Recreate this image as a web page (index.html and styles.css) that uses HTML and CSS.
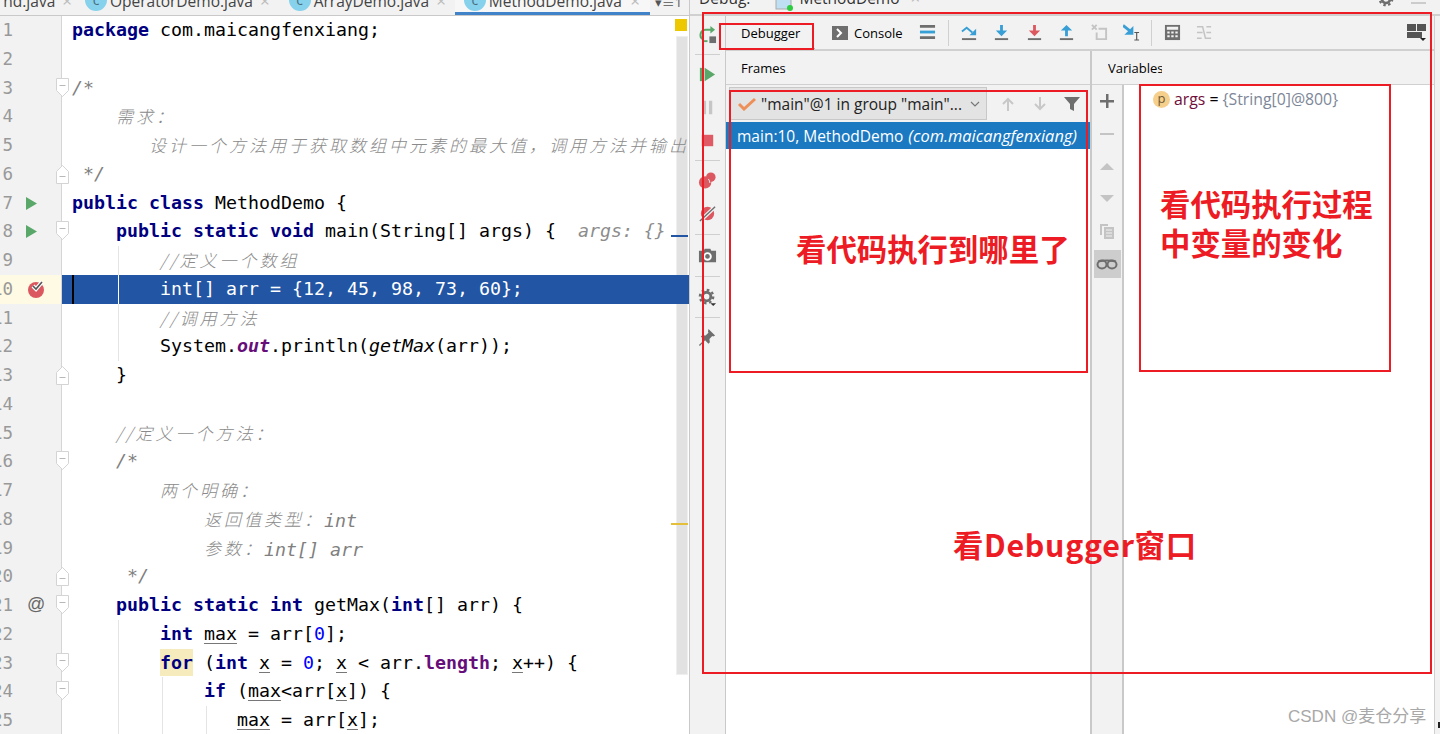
FILE: index.html
```html
<!DOCTYPE html>
<html lang="zh-CN">
<head>
<meta charset="utf-8">
<title>MethodDemo Debugger</title>
<link rel="stylesheet" href="styles.css">
</head>
<body>
<svg class="defs" width="0" height="0" aria-hidden="true">
  <symbol id="fold-open" viewBox="0 0 13 20"><path d="M.5.5h12v12l-6 6-6-6z" fill="#fff" stroke="#d4d4d4"/><path d="M3.5 7.5h6" stroke="#b8b8b8"/></symbol>
  <symbol id="fold-close" viewBox="0 0 13 20"><path d="M.5 19.5h12v-12l-6-6-6 6z" fill="#fff" stroke="#d4d4d4"/><path d="M3.5 12.5h6" stroke="#b8b8b8"/></symbol>
  <symbol id="run" viewBox="0 0 11 13"><path d="M0 0l11 6.5L0 13z" fill="#59a869"/></symbol>
</svg>
<div class="app">
  <section class="editor">
    <nav class="tabs">
      <div class="tab tab-first"><span class="tab-name">nd.java</span><span class="tab-x">×</span></div>
      <div class="tab"><span class="tab-c">c</span><span class="tab-name">OperatorDemo.java</span><span class="tab-x">×</span></div>
      <div class="tab"><span class="tab-c">c</span><span class="tab-name">ArrayDemo.java</span><span class="tab-x">×</span></div>
      <div class="tab tab-active"><span class="tab-c">c</span><span class="tab-name">MethodDemo.java</span><span class="tab-x">×</span></div>
      <div class="tab-more">▾≡1</div>
    </nav>
    <div class="code">
      <div class="scroll-track"></div>
      <div class="line"><div class="gutter"><span class="num">1</span></div><pre class="src"><b>package</b> com.maicangfenxiang;</pre></div>
      <div class="line"><div class="gutter"><span class="num">2</span></div><pre class="src"></pre></div>
      <div class="line"><div class="gutter"><span class="num">3</span><svg class="fold"><use href="#fold-open"/></svg></div><pre class="src"><i>/*</i></pre></div>
      <div class="line"><div class="gutter"><span class="num">4</span></div><pre class="src"><i>    <span class="hw">需求：</span></i></pre></div>
      <div class="line"><div class="gutter"><span class="num">5</span></div><pre class="src"><i>       <span class="hw">设计一个方法用于获取数组中元素的最大值，调用方法并输出</span></i></pre></div>
      <div class="line"><div class="gutter"><span class="num">6</span><svg class="fold"><use href="#fold-close"/></svg></div><pre class="src"><i> */</i></pre></div>
      <div class="line"><div class="gutter"><span class="num">7</span><svg class="gicon gicon-run"><use href="#run"/></svg></div><pre class="src"><b>public class</b> MethodDemo {</pre></div>
      <div class="line"><div class="gutter"><span class="num">8</span><svg class="gicon gicon-run"><use href="#run"/></svg><svg class="fold"><use href="#fold-open"/></svg></div><pre class="src">    <b>public static void</b> main(String[] args) {  <i class="hint">args: {}</i></pre></div>
      <div class="line guide1"><div class="gutter"><span class="num">9</span></div><pre class="src"><i>        <span class="hw">//定义一个数组</span></i></pre></div>
      <div class="line exec"><div class="gutter"><span class="num">10</span><svg class="gicon gicon-bp" viewBox="0 0 18 18"><circle cx="9" cy="10" r="8" fill="#db5860"/><path d="M6 6l3 3 6-7" fill="none" stroke="#fff" stroke-width="4"/><path d="M6 6l3 3 6-7" fill="none" stroke="#555" stroke-width="1.6"/></svg></div><pre class="src"><span class="caret"></span>        int[] arr = {12, 45, 98, 73, 60};</pre></div>
      <div class="line guide1"><div class="gutter"><span class="num">11</span></div><pre class="src"><i>        <span class="hw">//调用方法</span></i></pre></div>
      <div class="line guide1"><div class="gutter"><span class="num">12</span></div><pre class="src">        System.<em class="field">out</em>.println(<em>getMax</em>(arr));</pre></div>
      <div class="line"><div class="gutter"><span class="num">13</span><svg class="fold"><use href="#fold-close"/></svg></div><pre class="src">    }</pre></div>
      <div class="line"><div class="gutter"><span class="num">14</span></div><pre class="src"></pre></div>
      <div class="line"><div class="gutter"><span class="num">15</span></div><pre class="src"><i>    <span class="hw">//定义一个方法：</span></i></pre></div>
      <div class="line"><div class="gutter"><span class="num">16</span><svg class="fold"><use href="#fold-open"/></svg></div><pre class="src"><i>    /*</i></pre></div>
      <div class="line"><div class="gutter"><span class="num">17</span></div><pre class="src"><i>        <span class="hw">两个明确：</span></i></pre></div>
      <div class="line"><div class="gutter"><span class="num">18</span></div><pre class="src"><i>            <span class="hw">返回值类型：</span>int</i></pre></div>
      <div class="line"><div class="gutter"><span class="num">19</span></div><pre class="src"><i>            <span class="hw">参数：</span>int[] arr</i></pre></div>
      <div class="line"><div class="gutter"><span class="num">20</span><svg class="fold"><use href="#fold-close"/></svg></div><pre class="src"><i>     */</i></pre></div>
      <div class="line"><div class="gutter"><span class="num">21</span><span class="gicon gicon-at">@</span><svg class="fold"><use href="#fold-open"/></svg></div><pre class="src">    <b>public static int</b> getMax(<b>int</b>[] arr) {</pre></div>
      <div class="line guide1"><div class="gutter"><span class="num">22</span></div><pre class="src">        <b>int</b> <u>max</u> = arr[<span class="n">0</span>];</pre></div>
      <div class="line guide1"><div class="gutter"><span class="num">23</span><svg class="fold"><use href="#fold-open"/></svg></div><pre class="src">        <b class="match">for</b> (<b>int</b> <u>x</u> = <span class="n">0</span>; <u>x</u> &lt; arr.<b class="field">length</b>; <u>x</u>++) {</pre></div>
      <div class="line guide2"><div class="gutter"><span class="num">24</span><svg class="fold"><use href="#fold-open"/></svg></div><pre class="src">            <b>if</b> (<u>max</u>&lt;arr[<u>x</u>]) {</pre></div>
      <div class="line guide3"><div class="gutter"><span class="num">25</span></div><pre class="src">               <u>max</u> = arr[<u>x</u>];</pre></div>
      <div class="mark mark-top"></div>
      <div class="mark mark-blue"></div>
      <div class="mark mark-yellow"></div>
    </div>
  </section>

  <section class="debug">
    <header class="debug-head">
      <span class="debug-title">Debug:</span>
      <div class="debug-tab">
        <svg class="debug-tab-icon" viewBox="0 0 18 16"><rect x="1" y="1" width="15" height="13" fill="#bfe0f4" stroke="#aaa"/><circle cx="15" cy="13" r="3" fill="#2ecc40"/></svg>
        <span>MethodDemo</span><span class="tab-x">×</span>
      </div>
      <div class="head-right">
        <svg class="head-gear" viewBox="0 0 18 18"><circle cx="9" cy="9" r="4.500" fill="none" stroke="#6e6e6e" stroke-width="3"/><circle cx="9" cy="9" r="7" fill="none" stroke="#6e6e6e" stroke-width="2.500" stroke-dasharray="2.750 2.750"/></svg>
        <span class="head-min"></span>
      </div>
    </header>
    <div class="debug-body">
      <aside class="strip">
        <svg class="ico" viewBox="0 0 20 20"><path d="M15 5H8a5.500 5.500 0 0 0-3 10" fill="none" stroke="#59a869" stroke-width="2.200"/><path d="M13 1l5 4-5 4z" fill="#59a869"/><path d="M5 17h5" stroke="#59a869" stroke-width="2"/><rect x="12" y="12" width="7" height="7" fill="#6e6e6e"/></svg>
        <div class="sep"></div>
        <svg class="ico" viewBox="0 0 20 20"><rect x="2" y="3" width="3" height="14" fill="#59a869"/><path d="M7 3l11 7-11 7z" fill="#59a869"/></svg>
        <svg class="ico" viewBox="0 0 20 20"><path d="M5 3h3.500v14H5zM11.500 3H15v14h-3.500z" fill="#c6c6c6"/></svg>
        <svg class="ico" viewBox="0 0 20 20"><rect x="4" y="4" width="12" height="12" fill="#e05a65"/></svg>
        <div class="sep"></div>
        <svg class="ico" viewBox="0 0 20 20"><circle cx="7.500" cy="12" r="6.500" fill="#db5860"/><circle cx="13.500" cy="6.500" r="5" fill="#db5860"/><path d="M11 8.500a6.500 6.500 0 0 1 1.500 4" stroke="#f2f2f2" fill="none"/></svg>
        <svg class="ico" viewBox="0 0 20 20"><circle cx="10" cy="10" r="7" fill="#db5860"/><path d="M2 18L18 3" stroke="#f2f2f2" stroke-width="4"/><path d="M2 18L18 3" stroke="#6e6e6e" stroke-width="1.500"/></svg>
        <div class="sep sep-wide"></div>
        <svg class="ico" viewBox="0 0 20 20"><path d="M1 5h5l1-2h6l1 2h5v12H1z" fill="#6e6e6e"/><circle cx="10" cy="11" r="3.500" fill="none" stroke="#fff" stroke-width="2"/></svg>
        <div class="sep sep-wide"></div>
        <svg class="ico" viewBox="0 0 20 20"><circle cx="9" cy="9" r="4.500" fill="none" stroke="#6e6e6e" stroke-width="3"/><circle cx="9" cy="9" r="7" fill="none" stroke="#6e6e6e" stroke-width="2.500" stroke-dasharray="2.750 2.750"/><path d="M13 16h6l-3 3z" fill="#333"/></svg>
        <div class="sep"></div>
        <svg class="ico" viewBox="0 0 20 20"><path d="M11 1l7 7-2 1-1-.500-3 3 .500 3.500-1.500 1.500-3.500-3.500L2 19l-1-1 5.500-5.500L3 9l1.500-1.500L8 8l3-3-.500-1z" fill="#6e6e6e"/></svg>
      </aside>
      <div class="main">
        <div class="toolbar">
          <div class="tool-tab tool-tab-active">Debugger</div>
          <div class="tool-tab tool-tab-console"><svg class="ico-sm" viewBox="0 0 16 16"><rect width="16" height="14" y="1" fill="#6e6e6e"/><path d="M5 4l4 4-4 4" fill="none" stroke="#fff" stroke-width="2"/></svg>Console</div>
          <svg class="ico-tb ico-threads" viewBox="0 0 18 18"><path d="M1 1h16v3H1zM1 13h16v3H1z" fill="#6e6e6e"/><path d="M1 7h16v3H1z" fill="#389fd6"/></svg>
          <div class="tb-sep"></div>
          <svg class="ico-tb" viewBox="0 0 18 18"><path d="M1 8l5-4 6 5" fill="none" stroke="#389fd6" stroke-width="2"/><path d="M16 5v7H9z" fill="#389fd6"/><path d="M1 15h15v2H1z" fill="#6e6e6e"/></svg>
          <svg class="ico-tb" viewBox="0 0 18 18"><path d="M7.500 1h3v6H15l-6 6-6-6h4.500z" fill="#389fd6"/><path d="M2 15h14v2H2z" fill="#6e6e6e"/></svg>
          <svg class="ico-tb" viewBox="0 0 18 18"><path d="M7.500 1h3v6H15l-6 6-6-6h4.500z" fill="#db5860"/><path d="M2 15h14v2H2z" fill="#6e6e6e"/></svg>
          <svg class="ico-tb" viewBox="0 0 18 18"><path d="M7.500 13h3V7H15L9 1 3 7h4.500z" fill="#389fd6"/><path d="M2 15h14v2H2z" fill="#6e6e6e"/></svg>
          <svg class="ico-tb" viewBox="0 0 18 18"><path d="M1 1l5 5M6 1L1 6" stroke="#c4c4c4" stroke-width="2"/><path d="M8 5h8v11H6V9" fill="none" stroke="#c4c4c4" stroke-width="2"/></svg>
          <svg class="ico-tb" viewBox="0 0 18 18"><path d="M0 1.500l9 7" stroke="#389fd6" stroke-width="3"/><path d="M11 2v9.500H1.500z" fill="#389fd6"/><path d="M12 9h5M12 17h5M14.500 9v8" stroke="#555" stroke-width="1.200"/></svg>
          <div class="tb-sep tb-sep-2"></div>
          <svg class="ico-tb" viewBox="0 0 18 18"><path d="M1 1h16v16H1z" fill="#6e6e6e"/><path d="M3 3h12v3H3zM3.500 8h2.500v2H3.500zM7.700 8h2.500v2H7.700zM12 8h2.500v2H12zM3.500 12h2.500v2H3.500zM7.700 12h2.500v2H7.700zM12 12h2.500v2H12z" fill="#f2f2f2"/></svg>
          <svg class="ico-tb" viewBox="0 0 18 18"><path d="M1 3h6l3 12h6M1 9h6M1 15h5M11 3h5M11 9h5" fill="none" stroke="#c4c4c4" stroke-width="1.600"/></svg>
          <svg class="ico-tb ico-layout" viewBox="0 0 19 19"><path d="M0 1h9v7H0zM10 1h9v7h-9zM0 9h15v6H0z" fill="#555"/><path d="M13 15h6l-3 3z" fill="#222"/></svg>
        </div>
        <div class="panes">
          <div class="pane-frames">
            <div class="pane-title">Frames</div>
            <div class="frames-bar">
              <div class="thread-select">
                <svg class="ico-check" viewBox="0 0 18 14"><path d="M1 7l5 5L17 2" fill="none" stroke="#ee8f57" stroke-width="3"/></svg>
                <span class="thread-name">"main"@1 in group "main"...</span>
                <svg class="ico-caret" viewBox="0 0 10 6"><path d="M1 1l4 4 4-4" fill="none" stroke="#777" stroke-width="1.200"/></svg>
              </div>
              <svg class="ico-fb ico-fb-first" viewBox="0 0 16 16"><path d="M8 15V3M3 8l5-5 5 5" fill="none" stroke="#c8c8c8" stroke-width="2"/></svg>
              <svg class="ico-fb" viewBox="0 0 16 16"><path d="M8 1v12M3 8l5 5 5-5" fill="none" stroke="#c8c8c8" stroke-width="2"/></svg>
              <svg class="ico-fb" viewBox="0 0 16 16"><path d="M0 1h16l-6 7v7l-4-2V8z" fill="#6e6e6e"/></svg>
            </div>
            <div class="frame-row">main:10, MethodDemo <em>(com.maicangfenxiang)</em></div>
          </div>
          <div class="pane-vars">
            <div class="pane-title pane-title-vars"><span class="vars-clip">Variables</span></div>
            <div class="vars-body">
              <aside class="watch-strip">
                <svg class="ico-w" viewBox="0 0 16 16"><path d="M7 1h2.500v6H15v2.500H9.500V15H7V9.500H1V7h6z" fill="#6e6e6e"/></svg>
                <svg class="ico-w" viewBox="0 0 16 16"><path d="M1 7h14v2H1z" fill="#c4c4c4"/></svg>
                <svg class="ico-w" viewBox="0 0 16 16"><path d="M1 12L8 5l7 7z" fill="#c4c4c4"/></svg>
                <svg class="ico-w" viewBox="0 0 16 16"><path d="M1 4h14L8 11z" fill="#c4c4c4"/></svg>
                <svg class="ico-w" viewBox="0 0 16 16"><path d="M1 1h8v2H3v9H1z" fill="#c4c4c4"/><path d="M5 4h10v12H5z" fill="#c4c4c4"/><path d="M7 7h6M7 10h6M7 13h6" stroke="#f2f2f2"/></svg>
                <div class="watch-on"><svg class="ico-w" viewBox="0 0 22 12"><ellipse cx="6" cy="6.500" rx="4.500" ry="4" fill="none" stroke="#6e6e6e" stroke-width="2"/><ellipse cx="16" cy="6.500" rx="4.500" ry="4" fill="none" stroke="#6e6e6e" stroke-width="2"/><path d="M2 3.500q9-2 18 0" fill="none" stroke="#6e6e6e" stroke-width="2"/></svg></div>
              </aside>
              <div class="vars-list">
                <div class="var-row"><span class="var-p">p</span><span class="var-name">args</span><span class="var-eq"> = </span><span class="var-val">{String[0]@800}</span></div>
              </div>
            </div>
          </div>
        </div>
      </div>
      <div class="edge"><span class="edge-speck"></span></div>
    </div>
  </section>

  <div class="box box-outer"></div>
  <div class="box box-tab"></div>
  <div class="box box-frames"></div>
  <div class="box box-vars"></div>
  <div class="note note-frames">看代码执行到哪里了</div>
  <div class="note note-vars">看代码执行过程<br>中变量的变化</div>
  <div class="note note-debugger">看Debugger窗口</div>
  <div class="watermark">CSDN @麦仓分享</div>
</div>
</body>
</html>
```

FILE: styles.css
```css
* { box-sizing: border-box; }
html, body { margin: 0; padding: 0; background: #f2f2f2; }
body { width: 1440px; height: 734px; overflow: hidden; }
.defs { position: absolute; }
.app {
  position: relative;
  display: flex;
  width: 1440px;
  height: 734px;
  overflow: hidden;
  font-family: "Open Sans", "Noto Sans CJK SC", sans-serif;
  color: #000;
}

/* editor */
.editor { width: 690px; flex: none; display: flex; flex-direction: column; background: #fff; border-right: 1px solid #c9c9c9; }
.tabs { height: 16px; flex: none; display: flex; background: #f2f2f2; border-bottom: 1px solid #c9c9c9; overflow: hidden; font-size: 15.5px; color: #444; }
.tab { display: flex; align-items: flex-start; height: 15px; padding: 0 10px 0 9px; flex: none; }
.tab-first { width: 76px; justify-content: flex-end; padding: 0 4px 0 0; }
.tab-active { width: 195px; padding-left: 9px; padding-right: 10px; border-bottom: 3px solid #4083c9; background: #f7f7f7; margin-left: -1px; }
.tab-name { line-height: 20px; margin-top: -9px; white-space: nowrap; }
.tab-c { width: 22px; height: 22px; flex: none; margin-top: -11px; margin-right: 3px; border-radius: 50%; background: #86d1ec; color: #4a6d7c; font-size: 14px; line-height: 22px; text-align: center; }
.tab-x { margin-left: 7px; margin-top: -9px; line-height: 20px; color: #bbb; font-size: 17px; }
.tab-active .tab-name { flex: 1; }
.tab-more { margin-left: 5px; margin-top: -5px; line-height: 14px; color: #555; font-size: 13px; white-space: nowrap; }

.code { position: relative; flex: 1; overflow: hidden; font-family: "DejaVu Sans Mono", "Noto Sans CJK SC", monospace; font-size: 18.27px; }
.line { position: relative; z-index: 1; display: flex; height: 28.75px; line-height: 28.75px; background-repeat: no-repeat; }
.gutter { position: relative; width: 62px; flex: none; background: #f2f2f2; border-right: 1px solid #d5d5d5; color: #999; }
.num { display: flex; justify-content: flex-end; width: 13px; white-space: nowrap; font-size: 17.5px; }
.src { margin: 0; padding-left: 10px; font: inherit; white-space: pre; flex: 1; overflow: hidden; color: #000; }
.src b { color: #000080; font-weight: 700; }
.src i { color: #808080; font-style: italic; }
.src em { font-style: italic; }
.src .hint { color: #8c8c8c; }
.src .field { color: #660e7a; font-weight: 700; }
.src .n { color: #0000ff; }
.src u { text-decoration-color: #777; text-underline-offset: 3px; }
.src .match { background: #f6ebbc; padding: 3px 0; }
.hw { font-family: "Noto Sans CJK SC", sans-serif; font-size: 17px; letter-spacing: 3px; font-weight: 300; color: #8a8a8a; vertical-align: 1px; }
.fold { position: absolute; left: 56px; top: 4px; width: 13px; height: 20px; z-index: 2; }
.gicon { position: absolute; }
.gicon-run { left: 26px; top: 8px; width: 11px; height: 13px; }
.gicon-bp { left: 27px; top: 5px; width: 18px; height: 18px; }
.gicon-at { left: 27px; top: -1px; color: #666; font-size: 18px; font-family: "Liberation Sans", sans-serif; }
.guide1 { background-image: linear-gradient(#e4e4e4, #e4e4e4); background-size: 1px 100%; background-position: 118px 0; }
.guide2 { background-image: linear-gradient(#e4e4e4, #e4e4e4), linear-gradient(#e4e4e4, #e4e4e4); background-size: 1px 100%, 1px 100%; background-position: 118px 0, 162px 0; }
.guide3 { background-image: linear-gradient(#e4e4e4, #e4e4e4), linear-gradient(#e4e4e4, #e4e4e4), linear-gradient(#e4e4e4, #e4e4e4); background-size: 1px 100%, 1px 100%, 1px 100%; background-position: 118px 0, 162px 0, 206px 0; }
.exec .gutter { background: #fffae3; }
.exec { z-index: 5; }
.exec .src { position: relative; background: linear-gradient(#fff, #fff) no-repeat 56px 0 / 1px 100%, #2255a4; color: #fff; }
.caret { position: absolute; left: 10px; top: 0; bottom: 0; width: 2px; background: #000; }
.scroll-track { position: absolute; z-index: 0; left: 676px; top: 20px; width: 12px; height: 639px; background: #e2e2e2; border: 1px solid #efefef; }
.mark { position: absolute; z-index: 6; }
.mark-top { left: 675px; top: 3px; width: 12px; height: 12px; background: #edc800; }
.mark-blue { left: 671px; top: 219px; width: 17px; height: 2px; background: #2255a4; }
.mark-yellow { left: 671px; top: 507px; width: 17px; height: 2px; background: #e3bf3a; }

/* debug window */
.debug { flex: 1; display: flex; flex-direction: column; min-width: 0; background: #f2f2f2; }
.debug-head { position: relative; height: 16px; flex: none; display: flex; overflow: hidden; font-size: 15.5px; color: #333; border-bottom: 2px solid #d0d0d0; }
.debug-title { margin-left: 9px; margin-top: -12px; line-height: 20px; }
.debug-tab { display: flex; width: 175px; margin-left: 9px; height: 14px; padding-left: 16px; box-shadow: inset 0 -2px #a9b0bb; gap: 6px; flex: none; }
.debug-tab span { margin-top: -12px; line-height: 20px; }
.debug-tab .tab-x { margin-left: 5px; }
.debug-tab-icon { width: 18px; height: 16px; margin-top: -5px; flex: none; }
.head-right { display: flex; margin-left: auto; }
.head-gear { width: 16px; height: 16px; margin-top: -9px; margin-right: 17px; }
.head-min { width: 15px; height: 2px; margin-top: 2px; margin-right: 14px; background: #ccc; }
.debug-body { flex: 1; display: flex; min-height: 0; }
.strip { width: 36px; flex: none; display: flex; flex-direction: column; align-items: center; padding-top: 2px; border-right: 1px solid #c9c9c9; }
.strip .ico { width: 19px; height: 19px; margin: 7px 0; flex: none; }
.sep { width: 25px; height: 1px; margin: 3px 0; background: #cfcfcf; flex: none; }
.sep-wide { margin: 4px 0; }
.main { flex: 1; display: flex; flex-direction: column; min-width: 0; }
.toolbar { height: 35px; flex: none; display: flex; align-items: center; border-bottom: 2px solid #d0d0d0; font-size: 13px; }
.tool-tab { height: 33px; display: flex; align-items: center; flex: none; }
.tool-tab-active { width: 89px; padding-left: 15px; box-shadow: inset 0 -1px #b0b0b0; }
.tool-tab-console { margin-left: 17px; gap: 6px; }
.ico-sm { width: 16px; height: 16px; }
.ico-tb { width: 17px; height: 17px; margin-right: 15.500px; flex: none; }
.ico-threads { margin-left: 16px; margin-right: 12px; }
.tb-sep { width: 1px; height: 26px; background: #d0d0d0; margin-right: 12px; flex: none; }
.tb-sep-2 { margin-left: -5px; margin-right: 12px; }
.ico-layout { margin-left: auto; margin-right: 8px; width: 19px; height: 19px; }
.panes { flex: 1; display: flex; min-height: 0; }
.pane-frames { width: 366px; flex: none; display: flex; flex-direction: column; border-right: 2px solid #c9c9c9; background: #fff; }
.pane-title { height: 34px; flex: none; display: flex; align-items: center; padding-left: 15px; font-size: 13px; background: #f2f2f2; border-bottom: 1px solid #d0d0d0; }
.frames-bar { height: 37px; flex: none; display: flex; align-items: center; background: #f2f2f2; padding-left: 3px; }
.thread-select { width: 258px; height: 33px; flex: none; display: flex; align-items: center; padding-left: 8px; background: #e3e3e3; border: 1px solid #c8c8c8; font-size: 15.500px; color: #222; white-space: nowrap; }
.ico-check { width: 18px; height: 14px; margin-right: 5px; flex: none; }
.thread-name { flex: 1; overflow: hidden; }
.ico-caret { width: 10px; height: 6px; margin-right: 6px; flex: none; }
.ico-fb { width: 16px; height: 16px; margin-right: 16px; flex: none; }
.ico-fb-first { margin-left: 13px; }
.frame-row { height: 27px; flex: none; display: flex; align-items: center; gap: 5px; padding-left: 11px; background: #1b79c2; color: #fff; font-size: 15.500px; white-space: nowrap; }
.frame-row em { font-style: italic; font-size: 16.400px; }
.pane-vars { flex: 1; display: flex; flex-direction: column; min-width: 0; }
.pane-title-vars { padding-left: 16px; }
.vars-clip { display: block; width: 54px; overflow: hidden; white-space: nowrap; }
.vars-body { flex: 1; display: flex; min-height: 0; }
.watch-strip { width: 32px; flex: none; display: flex; flex-direction: column; align-items: center; padding-top: 8px; border-right: 2px solid #c9c9c9; }
.watch-strip .ico-w { width: 16px; height: 16px; flex: none; margin-bottom: 16.500px; }
.watch-on { width: 27px; height: 28px; display: flex; align-items: center; justify-content: center; background: #cdcdcd; margin-top: -5.500px; flex: none; }
.watch-strip .watch-on .ico-w { width: 22px; margin: 0; }
.vars-list { flex: 1; background: #fff; padding: 4px 0 0 29px; }
.var-row { display: flex; align-items: center; height: 20px; font-size: 15.800px; white-space: pre; }
.var-p { width: 17px; height: 17px; margin-right: 4px; border-radius: 50%; background: #f6cf8d; color: #6d5a33; font-size: 13px; line-height: 15px; text-align: center; }
.var-name { color: #710e3a; }
.var-val { color: #7d8798; }
.edge { width: 6px; flex: none; position: relative; background: #f2f2f2; border-left: 1px solid #d0d0d0; }
.edge-speck { position: absolute; left: 3px; bottom: 6px; width: 2px; height: 6px; background: #222; }

/* overlays */
.box { position: absolute; border: 2px solid #ed1c24; pointer-events: none; z-index: 8; }
.box-outer { left: 702px; top: 12px; width: 730px; height: 662px; }
.box-tab { left: 719px; top: 23px; width: 95px; height: 27px; }
.box-frames { left: 729px; top: 90px; width: 359px; height: 283px; }
.box-vars { left: 1139px; top: 84px; width: 252px; height: 288px; }
.note { position: absolute; z-index: 8; color: #ed1c24; font-family: "Noto Sans CJK SC", sans-serif; font-weight: 700; font-size: 30.400px; line-height: 39px; white-space: nowrap; }
.note-frames { left: 796px; top: 229px; }
.note-vars { left: 1160px; top: 184px; }
.note-debugger { left: 953px; top: 525px; letter-spacing: .7px; }
.watermark { position: absolute; z-index: 8; left: 1288px; top: 705px; font-family: "Liberation Sans", "Noto Sans CJK SC", sans-serif; font-size: 17px; line-height: 24px; color: #a8a8a8; white-space: nowrap; }
```
